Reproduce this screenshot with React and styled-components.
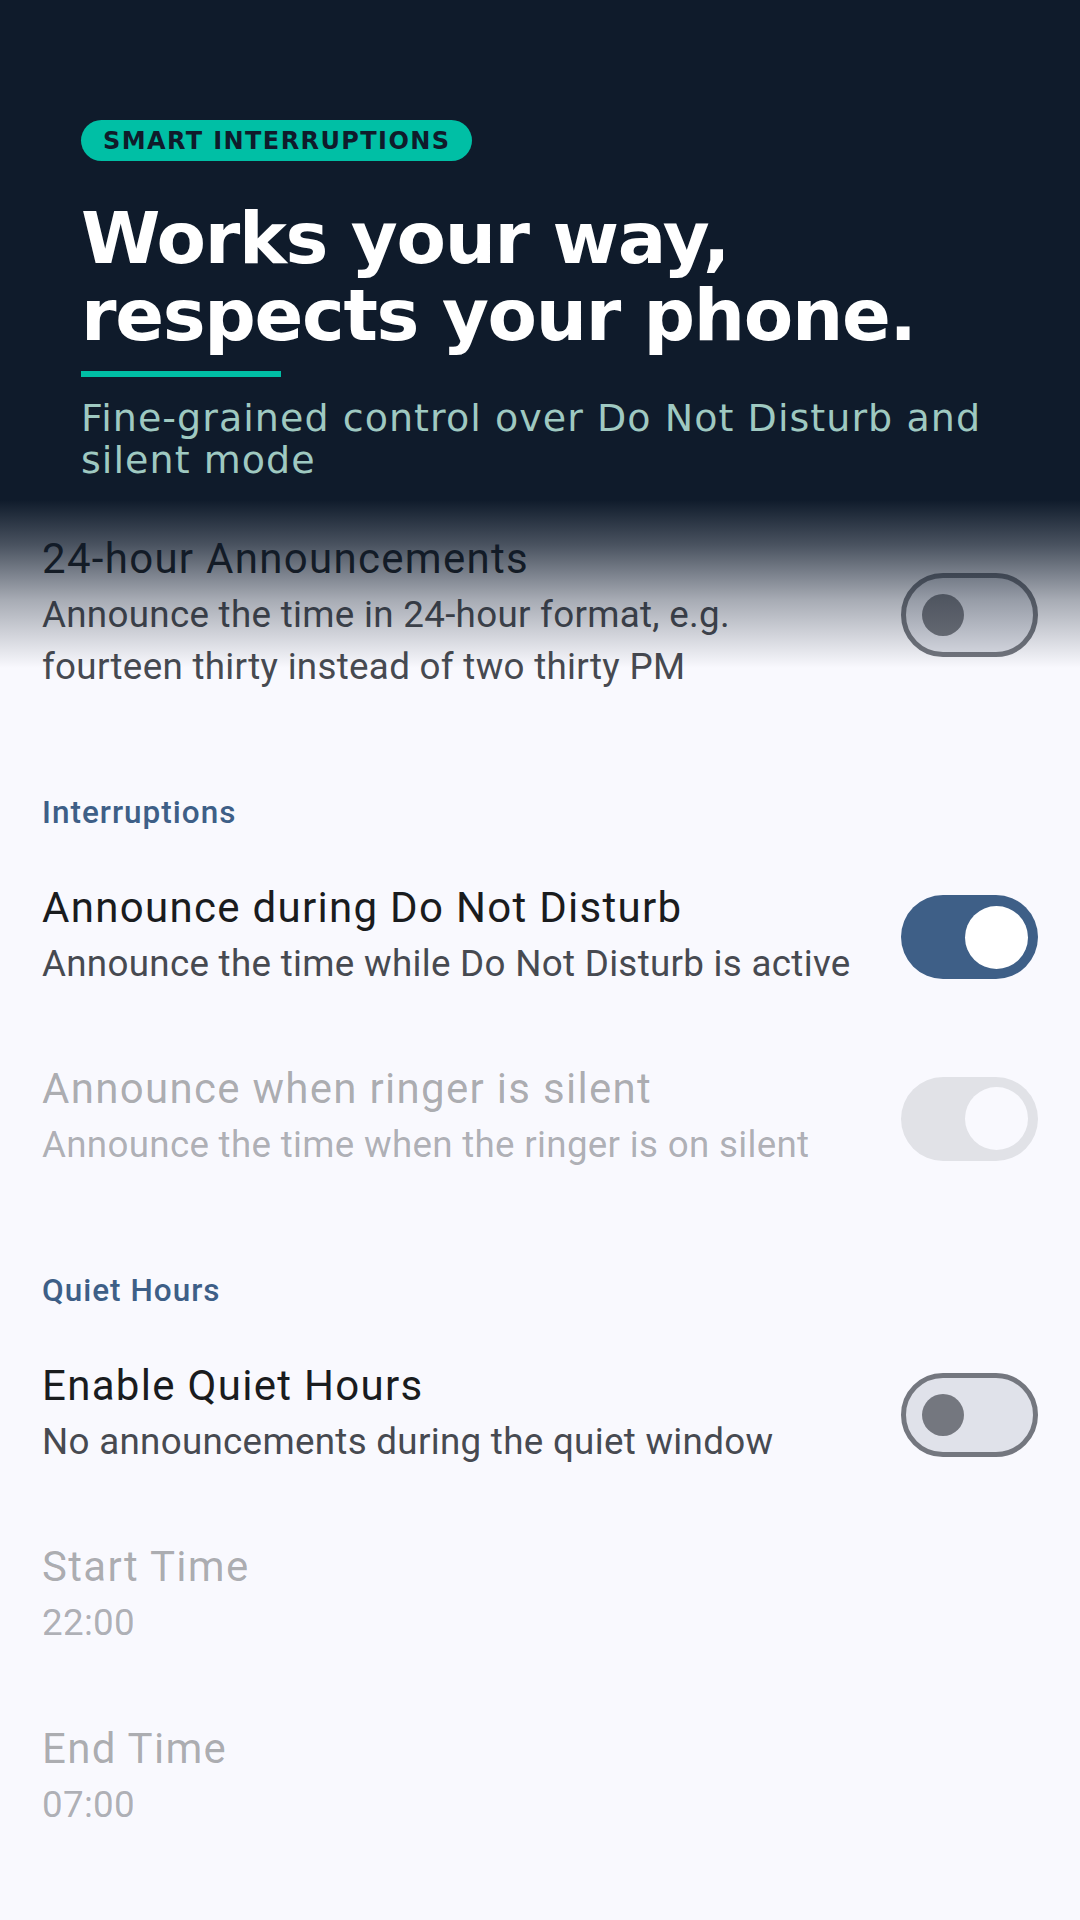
import React from 'react';
import styled, { createGlobalStyle, css } from 'styled-components';

const Color = {
    hero: '#0f1b2b',
    teal: '#00bfa5',
    heroSub: '#9fc9c1',
    surface: '#f9f9fe',
    title: '#1a1c1e',
    summary: '#474a51',
    primary: '#3e5f87',
    outline: '#74777f',
    trackOff: '#e0e2ea',
    trackDisabled: '#e1e2e7',
};

const GlobalStyle = createGlobalStyle`
    html, body {
        margin: 0;
        padding: 0;
        background: ${Color.surface};
    }
    * {
        box-sizing: border-box;
    }
`;

// one row of the settings list
const Preference = ({ title, summary, checked, disabled, hasSwitch }) => (
    <Row>
        <TextCol>
            <Title $disabled={disabled}>{title}</Title>
            <Summary $disabled={disabled}>{summary}</Summary>
        </TextCol>
        {hasSwitch && (
            <Track $on={checked} $disabled={disabled}>
                <Thumb $on={checked} $disabled={disabled} />
            </Track>
        )}
    </Row>
);

const App = () => (
    <Screen>
        <GlobalStyle />

        <List>
            <Preference
                hasSwitch
                title="24-hour Announcements"
                summary="Announce the time in 24-hour format, e.g. fourteen thirty instead of two thirty PM"
            />

            <Category>Interruptions</Category>
            <Preference
                hasSwitch
                checked
                title="Announce during Do Not Disturb"
                summary="Announce the time while Do Not Disturb is active"
            />
            <Preference
                hasSwitch
                checked
                disabled
                title="Announce when ringer is silent"
                summary="Announce the time when the ringer is on silent"
            />

            <Category>Quiet Hours</Category>
            <Preference
                hasSwitch
                title="Enable Quiet Hours"
                summary="No announcements during the quiet window"
            />
            <Preference disabled title="Start Time" summary="22:00" />
            <Preference disabled title="End Time" summary="07:00" />
        </List>

        {/* dark intro panel fading out over the list */}
        <Hero>
            <Badge>SMART INTERRUPTIONS</Badge>
            <Heading>
                Works your way,
                <br />
                respects your phone.
            </Heading>
            <Accent />
            <Subtitle>Fine-grained control over Do Not Disturb and silent mode</Subtitle>
        </Hero>
    </Screen>
);

const Screen = styled.div`
    position: relative;
    width: 1080px;
    min-height: 1920px;
    overflow: hidden;
    background: ${Color.surface};
    font-family: Roboto, 'Noto Sans', sans-serif;
`;

const Hero = styled.header`
    position: absolute;
    top: 0;
    left: 0;
    right: 0;
    height: 668px;
    padding: 120px 81px 0 81px;
    pointer-events: none;
    background: linear-gradient(
        to bottom,
        ${Color.hero} 0px,
        ${Color.hero} 500px,
        rgba(15, 27, 43, 0.75) 545px,
        rgba(15, 27, 43, 0.35) 600px,
        rgba(15, 27, 43, 0) 668px
    );
    font-family: 'DejaVu Sans', sans-serif;
`;

const Badge = styled.span`
    display: inline-flex;
    align-items: center;
    height: 41px;
    padding: 0 22px;
    border-radius: 21px;
    background: ${Color.teal};
    color: ${Color.hero};
    font-size: 24px;
    font-weight: bold;
    letter-spacing: 1.4px;
`;

const Heading = styled.h1`
    margin: 39px 0 0;
    color: #ffffff;
    font-size: 72px;
    line-height: 77px;
    font-weight: bold;
    letter-spacing: -1.3px;
`;

const Accent = styled.div`
    width: 200px;
    height: 6px;
    margin-top: 17px;
    background: ${Color.teal};
`;

const Subtitle = styled.p`
    margin: 20px 0 0;
    color: ${Color.heroSub};
    font-size: 38px;
    line-height: 42px;
    letter-spacing: 1.05px;
`;

const List = styled.main`
    display: flex;
    flex-direction: column;
    padding-top: 494px;
`;

const Category = styled.h2`
    margin: 0;
    padding: 65px 42px 10px;
    color: ${Color.primary};
    font-size: 31.5px;
    line-height: 40px;
    font-weight: 500;
    letter-spacing: 1px;
`;

const Row = styled.div`
    display: flex;
    align-items: center;
    gap: 42px;
    padding: 34.5px 42px;
`;

const TextCol = styled.div`
    flex: 1;
    min-width: 0;
`;

const Title = styled.div`
    color: ${p => (p.$disabled ? 'rgba(26, 28, 30, 0.36)' : Color.title)};
    font-size: 42px;
    line-height: 60px;
    letter-spacing: 1.3px;
`;

const Summary = styled.div`
    color: ${p => (p.$disabled ? 'rgba(68, 71, 78, 0.42)' : Color.summary)};
    font-size: 36.75px;
    line-height: 52.5px;
    letter-spacing: 0.3px;
`;

const Track = styled.div`
    flex: none;
    display: flex;
    align-items: center;
    width: 137px;
    height: 84px;
    margin-top: 7px;
    border-radius: 42px;
    padding: 0 16px;
    border: 5px solid ${Color.outline};
    background: ${Color.trackOff};

    ${p => p.$on && css`
        justify-content: flex-end;
        padding: 0 10px;
        border: none;
        background: ${Color.primary};
    `}

    ${p => p.$disabled && css`
        background: ${Color.trackDisabled};
    `}
`;

const Thumb = styled.div`
    width: 42px;
    height: 42px;
    border-radius: 50%;
    background: ${Color.outline};

    ${p => p.$on && css`
        width: 63px;
        height: 63px;
        background: ${p.$disabled ? Color.surface : '#ffffff'};
    `}
`;

export default App;
